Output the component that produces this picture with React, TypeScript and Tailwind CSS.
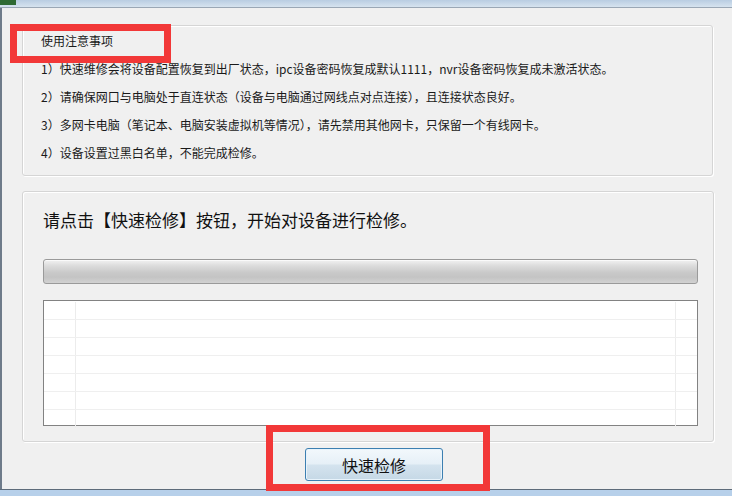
import React from "react";

const notes = [
  "1）快速维修会将设备配置恢复到出厂状态，ipc设备密码恢复成默认1111，nvr设备密码恢复成未激活状态。",
  "2）请确保网口与电脑处于直连状态（设备与电脑通过网线点对点连接），且连接状态良好。",
  "3）多网卡电脑（笔记本、电脑安装虚拟机等情况），请先禁用其他网卡，只保留一个有线网卡。",
  "4）设备设置过黑白名单，不能完成检修。",
];

export default function App() {
  const rows = [0, 1, 2, 3, 4, 5, 6];
  return (
    <div
      className="relative w-[732px] h-[496px] bg-[#f0f0f0] flex flex-col overflow-hidden text-black"
      style={{ fontFamily: '"Noto Sans CJK SC", "Noto Sans", sans-serif' }}
    >
      {/* window top frame */}
      <div className="h-[8px] flex shrink-0 border-b border-[#9aa7b5] bg-[linear-gradient(to_bottom,#b9cde2,#d6e3ef)]">
        <div className="w-[16px] h-[5px] bg-[#2f6a33]" />
      </div>

      <div className="flex flex-1">
        <div className="w-[2px] bg-[#6e7b8a]" />
        <div className="flex flex-col flex-1 pl-[20px] pt-[17px]">
          {/* group 1 */}
          <div className="w-[691px] h-[151px] border border-[#d5d5d5] rounded-[3px] shadow-[inset_1px_1px_0_#fff,1px_1px_0_#fff] pl-[18px] pt-[1px] text-[12px] leading-[28px] text-[#1a1a1a]">
            <div>使用注意事项</div>
            {notes.map((n) => (
              <div key={n}>{n}</div>
            ))}
          </div>

          {/* group 2 */}
          <div className="mt-[15px] w-[692px] h-[251px] border border-[#d5d5d5] rounded-[3px] shadow-[inset_1px_1px_0_#fff,1px_1px_0_#fff] pl-[20px] pt-[16px] flex flex-col">
            <div className="h-[24px] leading-[24px] text-[17px] text-[#111]">
              请点击【快速检修】按钮，开始对设备进行检修。
            </div>
            <div className="mt-[27px] w-[655px] h-[25px] rounded-[3px] border border-[#9a9a9a] bg-[linear-gradient(to_bottom,#f2f2f2_0%,#dcdcdc_25%,#c9c9c9_55%,#c4c4c4_75%,#d2d2d2_100%)] shadow-[inset_0_1px_0_#fafafa]" />
            <div className="mt-[16px] w-[655px] h-[126px] border border-[#828282] bg-white flex flex-col pt-[1px]">
              {rows.map((r) => (
                <div
                  key={r}
                  className={`flex h-[18px] shrink-0 ${r < 6 ? "border-b border-[#efefef]" : ""}`}
                >
                  <div className="w-[32px] border-r border-[#ececec]" />
                  <div className="flex-1" />
                  <div className="w-[22px] border-l border-[#ececec]" />
                </div>
              ))}
            </div>
          </div>

          {/* button */}
          <div className="mt-[6px] ml-[283px] w-[138px] h-[33px] rounded-[3px] border border-[#3c7fb1] bg-[linear-gradient(to_bottom,#f2f8fc_0%,#e6f0f7_48%,#d4e3ee_52%,#c5d8e6_100%)] shadow-[inset_0_0_0_1px_#e8f3fb] flex items-center justify-center text-[16px] text-[#111]">
            <span>快速检修</span>
          </div>
        </div>
      </div>

      {/* window bottom frame */}
      <div className="h-[7px] shrink-0 border-t border-[#5d6b7a] bg-[#b7d0ea]" />

      {/* red annotation boxes */}
      <div className="absolute left-[10px] top-[24px] w-[161px] h-[39px] border-[7px] border-[#f23838]" />
      <div className="absolute left-[266px] top-[425px] w-[224px] h-[66px] border-[7px] border-[#f23838]" />
    </div>
  );
}
